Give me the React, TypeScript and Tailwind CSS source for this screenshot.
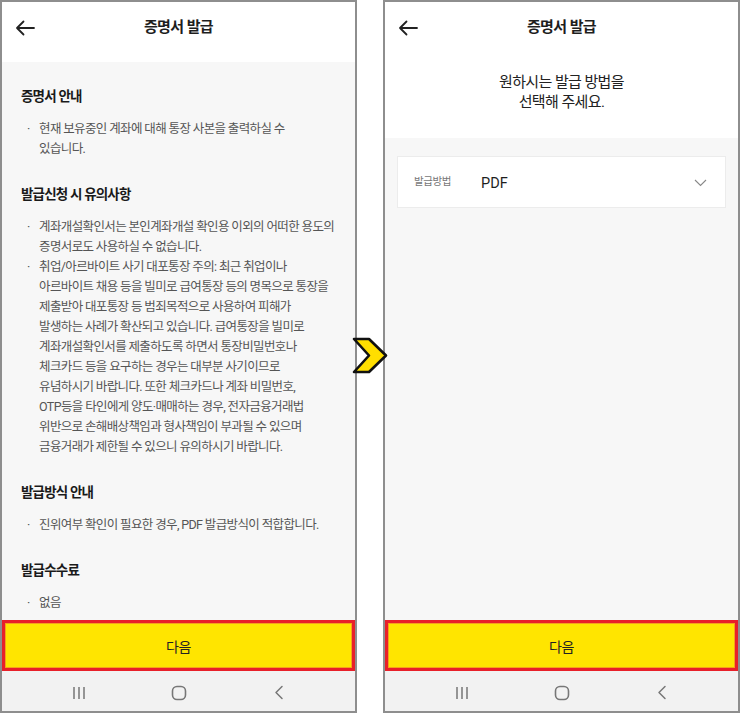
import React from "react";

type Section = {
  title: string;
  bullets: string[][];
};

const sections: Section[] = [
  {
    title: "증명서 안내",
    bullets: [["현재 보유중인 계좌에 대해 통장 사본을 출력하실 수", "있습니다."]],
  },
  {
    title: "발급신청 시 유의사항",
    bullets: [
      ["계좌개설확인서는 본인계좌개설 확인용 이외의 어떠한 용도의", "증명서로도 사용하실 수 없습니다."],
      [
        "취업/아르바이트 사기 대포통장 주의: 최근 취업이나",
        "아르바이트 채용 등을 빌미로 급여통장 등의 명목으로 통장을",
        "제출받아 대포통장 등 범죄목적으로 사용하여 피해가",
        "발생하는 사례가 확산되고 있습니다. 급여통장을 빌미로",
        "계좌개설확인서를 제출하도록 하면서 통장비밀번호나",
        "체크카드 등을 요구하는 경우는 대부분 사기이므로",
        "유념하시기 바랍니다. 또한 체크카드나 계좌 비밀번호,",
        "OTP등을 타인에게 양도·매매하는 경우, 전자금융거래법",
        "위반으로 손해배상책임과 형사책임이 부과될 수 있으며",
        "금융거래가 제한될 수 있으니 유의하시기 바랍니다.",
      ],
    ],
  },
  {
    title: "발급방식 안내",
    bullets: [["진위여부 확인이 필요한 경우, PDF 발급방식이 적합합니다."]],
  },
  {
    title: "발급수수료",
    bullets: [["없음"]],
  },
];

const Header = () => (
  <div className="h-[60px] flex items-center relative shrink-0">
    <svg className="absolute left-[13px] top-[18px]" width="20" height="16" viewBox="0 0 20 16" fill="none">
      <path d="M19 8H2M8.5 1.5L2 8l6.5 6.5" stroke="#222" strokeWidth="1.8" strokeLinecap="round" strokeLinejoin="round" />
    </svg>
    <div className="w-full text-center text-[15px] font-bold tracking-[-0.04em] text-[#1e1e1e] mt-[-10px]">증명서 발급</div>
  </div>
);

const NextButton = () => (
  <div className="h-[51px] shrink-0 border-[3px] border-[#e8202a]">
    <div className="h-full border border-[#f4a21c] bg-[#ffe500] flex items-center justify-center pt-[3px] text-[14px] tracking-[-0.03em] text-[#222]">
      다음
    </div>
  </div>
);

const NavBar = () => (
  <div className="h-[40px] shrink-0 bg-[#f2f2f2] flex items-center pl-[27px] pt-[3px]">
    <div className="w-[100px] flex justify-center">
      <svg width="14" height="14" viewBox="0 0 14 14">
        <path d="M2 1v12M7 1v12M12 1v12" stroke="#777" strokeWidth="1.5" />
      </svg>
    </div>
    <div className="w-[100px] flex justify-center">
      <svg width="16" height="16" viewBox="0 0 16 16" fill="none">
        <rect x="1.5" y="1.5" width="13" height="13" rx="4.5" stroke="#777" strokeWidth="1.6" />
      </svg>
    </div>
    <div className="w-[100px] flex justify-center">
      <svg width="10" height="15" viewBox="0 0 10 15" fill="none">
        <path d="M8 1.5L2 7.5l6 6" stroke="#777" strokeWidth="1.5" strokeLinecap="round" strokeLinejoin="round" />
      </svg>
    </div>
  </div>
);

const Phone = ({ children }: { children: React.ReactNode }) => (
  <div className="w-[357px] h-[713px] border-2 border-[#8e8e8e] bg-white flex flex-col overflow-hidden">
    {children}
  </div>
);

const App = () => {
  return (
    <div className="relative w-[740px] h-[713px] bg-white flex gap-[26px] font-['Roboto','Noto_Sans_CJK_KR',sans-serif]">
      <Phone>
        <Header />
        <div className="flex-1 bg-[#f7f7f7] pt-[24px] overflow-hidden">
          {sections.map((s) => (
            <div key={s.title} className="mb-[25px]">
              <h3 className="pl-[19px] text-[13.5px] leading-[20px] font-bold tracking-[-0.06em] text-[#1a1a1a]">
                {s.title}
              </h3>
              <ul className="mt-[13px] pl-[25px]">
                {s.bullets.map((lines, i) => (
                  <li key={i} className="flex text-[12.5px] leading-[20px] tracking-[-0.05em] text-[#555]">
                    <span className="w-[12px] shrink-0">·</span>
                    <div>
                      {lines.map((l) => (
                        <div key={l} className="whitespace-nowrap">
                          {l}
                        </div>
                      ))}
                    </div>
                  </li>
                ))}
              </ul>
            </div>
          ))}
        </div>
        <NextButton />
        <NavBar />
      </Phone>

      <Phone>
        <Header />
        <div className="h-[76px] shrink-0 pt-[11px] text-center text-[15px] leading-[19.5px] tracking-[-0.04em] text-[#222]">
          <p>원하시는 발급 방법을</p>
          <p>선택해 주세요.</p>
        </div>
        <div className="flex-1 bg-[#f7f7f7] pt-[18px] px-3">
          <div className="h-[52px] bg-white border border-[#ececec] flex items-center pl-[16px] pr-[18px]">
            <span className="w-[67px] text-[10.5px] tracking-[-0.04em] text-[#777] mt-[-1px]">발급방법</span>
            <span className="flex-1 text-[14.5px] text-[#1e1e1e] mt-[3px]">PDF</span>
            <svg width="13" height="8" viewBox="0 0 13 8" fill="none" className="mt-[1px]">
              <path d="M1 1l5.5 5.5L12 1" stroke="#888" strokeWidth="1.1" />
            </svg>
          </div>
        </div>
        <NextButton />
        <NavBar />
      </Phone>

      <svg className="absolute left-[350px] top-[335px]" width="40" height="42" viewBox="0 0 40 42" fill="none">
        <path d="M4 4H19L36 20.5L19 37H4L19 20.5Z" fill="#ffde00" stroke="#111" strokeWidth="2.6" strokeLinejoin="round" />
      </svg>
    </div>
  );
};

export default App;
